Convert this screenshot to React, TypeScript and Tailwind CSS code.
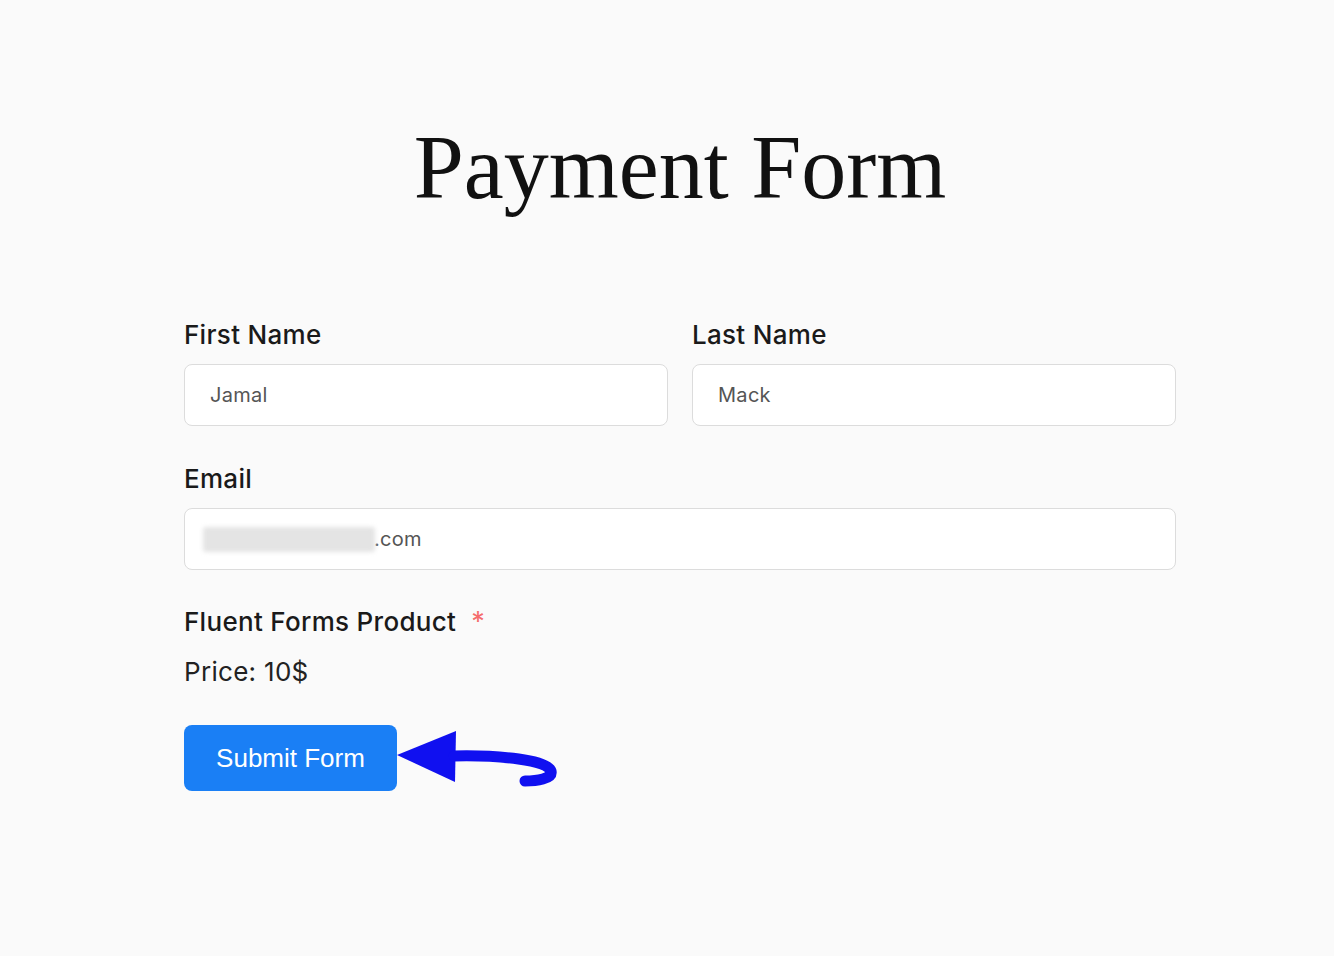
import { useState } from "react";

type FieldProps = {
  label: string;
  value: string;
  onChange: (v: string) => void;
};

const labelCls =
  "text-[26px] leading-[30px] font-medium tracking-[0.3px] text-[#1a1a1a]";

function Field({ label, value, onChange }: FieldProps) {
  return (
    <div className="flex flex-col">
      <label className={`${labelCls} mb-[14px]`}>{label}</label>
      <input
        type="text"
        value={value}
        onChange={(e) => onChange(e.target.value)}
        className="h-[62px] w-full rounded-[8px] border border-[#dcdcdc] bg-white px-[25px] text-[20px] tracking-[0.3px] text-[#555] outline-none"
      />
    </div>
  );
}

function Arrow() {
  return (
    <svg width="170" height="60" viewBox="397 732 170 60">
      <path d="M397 759 L456 735 L455 786 Z" fill="#1010f0" />
      <path
        d="M454 760 C 500 759, 548 764, 551 775 C 553 783, 536 785, 525 785"
        fill="none"
        stroke="#1010f0"
        strokeWidth="11"
        strokeLinecap="round"
      />
    </svg>
  );
}

export default function App() {
  const [form, setForm] = useState({ first: "Jamal", last: "Mack" });

  return (
    <div
      className="min-h-screen w-full bg-[#fafafa] pt-[118px]"
      style={{ fontFamily: "Inter, 'Noto Sans', sans-serif" }}
    >
      <div className="ml-[184px] w-[992px]">
        <h1 className="text-center text-[90px] leading-[100px] text-[#111] font-['Liberation_Serif',serif] mb-[102px]">
          Payment Form
        </h1>

        <form onSubmit={(e) => e.preventDefault()}>
          <div className="grid grid-cols-2 gap-x-[24px]">
            <Field
              label="First Name"
              value={form.first}
              onChange={(v) => setForm((s) => ({ ...s, first: v }))}
            />
            <Field
              label="Last Name"
              value={form.last}
              onChange={(v) => setForm((s) => ({ ...s, last: v }))}
            />
          </div>

          <div className="mt-[38px] flex flex-col">
            <label className={`${labelCls} mb-[14px]`}>Email</label>
            <div className="flex h-[62px] w-full items-center rounded-[8px] border border-[#dcdcdc] bg-white pl-[18px] text-[20px] tracking-[0.3px] text-[#555]">
              <span className="h-[25px] w-[172px] rounded-[3px] bg-[#e4e4e4] blur-[2px]" />
              <span className="-ml-[1px]">.com</span>
            </div>
          </div>

          <div className="mt-[37px] flex items-start">
            <span className={labelCls}>Fluent Forms Product</span>
            <span className="ml-[15px] mt-[3px] text-[27px] leading-[24px] text-[#f56c6c]">*</span>
          </div>

          <p className="mt-[20px] text-[26px] leading-[30px] tracking-[0.3px] text-[#222]">
            Price: 10$
          </p>

          <div className="mt-[38px] flex items-center">
            <button
              type="submit"
              className="h-[66px] w-[213px] rounded-[8px] bg-[#1a7ff5] text-[26px] text-white font-['Liberation_Sans',sans-serif]"
            >
              Submit Form
            </button>
            <Arrow />
          </div>
        </form>
      </div>
    </div>
  );
}
